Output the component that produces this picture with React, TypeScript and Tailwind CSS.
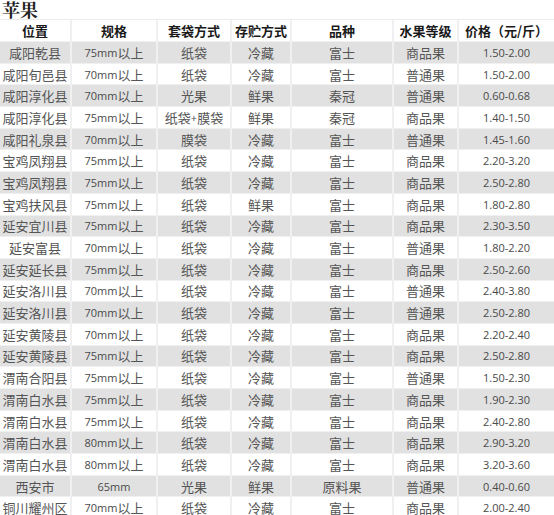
import React from 'react';

const HEADERS = ["位置", "规格", "套袋方式", "存贮方式", "品种", "水果等级", "价格（元/斤）"];

const ROWS: string[][] = [
  ["咸阳乾县", "75mm以上", "纸袋", "冷藏", "富士", "商品果", "1.50-2.00"],
  ["咸阳旬邑县", "70mm以上", "纸袋", "冷藏", "富士", "普通果", "1.50-2.00"],
  ["咸阳淳化县", "70mm以上", "光果", "鲜果", "秦冠", "普通果", "0.60-0.68"],
  ["咸阳淳化县", "75mm以上", "纸袋+膜袋", "鲜果", "秦冠", "商品果", "1.40-1.50"],
  ["咸阳礼泉县", "70mm以上", "膜袋", "冷藏", "富士", "普通果", "1.45-1.60"],
  ["宝鸡凤翔县", "75mm以上", "纸袋", "冷藏", "富士", "商品果", "2.20-3.20"],
  ["宝鸡凤翔县", "75mm以上", "纸袋", "冷藏", "富士", "商品果", "2.50-2.80"],
  ["宝鸡扶风县", "75mm以上", "纸袋", "鲜果", "富士", "商品果", "1.80-2.80"],
  ["延安宜川县", "75mm以上", "纸袋", "冷藏", "富士", "商品果", "2.30-3.50"],
  ["延安富县", "70mm以上", "纸袋", "冷藏", "富士", "普通果", "1.80-2.20"],
  ["延安延长县", "75mm以上", "纸袋", "冷藏", "富士", "商品果", "2.50-2.60"],
  ["延安洛川县", "70mm以上", "纸袋", "冷藏", "富士", "普通果", "2.40-3.80"],
  ["延安洛川县", "70mm以上", "纸袋", "冷藏", "富士", "普通果", "2.50-2.80"],
  ["延安黄陵县", "70mm以上", "纸袋", "冷藏", "富士", "商品果", "2.20-2.40"],
  ["延安黄陵县", "75mm以上", "纸袋", "冷藏", "富士", "商品果", "2.50-2.80"],
  ["渭南合阳县", "75mm以上", "纸袋", "冷藏", "富士", "普通果", "1.50-2.30"],
  ["渭南白水县", "75mm以上", "纸袋", "冷藏", "富士", "商品果", "1.90-2.30"],
  ["渭南白水县", "75mm以上", "纸袋", "冷藏", "富士", "商品果", "2.40-2.80"],
  ["渭南白水县", "80mm以上", "纸袋", "冷藏", "富士", "商品果", "2.90-3.20"],
  ["渭南白水县", "80mm以上", "纸袋", "冷藏", "富士", "商品果", "3.20-3.60"],
  ["西安市", "65mm", "光果", "鲜果", "原料果", "普通果", "0.40-0.60"],
  ["铜川耀州区", "70mm以上", "纸袋", "冷藏", "富士", "商品果", "2.00-2.40"],
];

const GRID = "grid grid-cols-[72px_86px_74px_60px_102px_65px_1fr]";

// latin runs are set a bit smaller than the CJK ones, like the original page
function Mixed({ text }: { text: string }) {
  const parts = text.match(/[\x00-\x7f]+|[^\x00-\x7f]+/g) || [];
  return (
    <>
      {parts.map((p, i) =>
        /^[\x00-\x7f]+$/.test(p) ? (
          <span key={i} className="text-[11px] text-[#4a4a4a] font-['Open_Sans','Noto_Sans_CJK_SC',sans-serif]">{p}</span>
        ) : (
          <span key={i} className="text-[13px]">{p}</span>
        )
      )}
    </>
  );
}

export default function App() {
  return (
    <div className="w-[554px] h-[515px] overflow-hidden bg-white font-['Noto_Sans_CJK_SC',sans-serif]">
      <div className="h-[19px] pl-[2px]">
        <h1 className="text-[18px] leading-[19px] font-bold text-[#222] font-['Noto_Serif_CJK_SC','Noto_Sans_CJK_SC',serif]">苹果</h1>
      </div>

      <div className="border-t border-[#ececec]">
        <div className={`${GRID} h-[22px] border-b border-[#f0f0f0] bg-white`}>
          {HEADERS.map((h, i) => (
            <div key={i} className="flex items-center justify-center border-r-2 border-[#f0f0f0] last:border-r-0 text-[13px] font-bold text-[#1a1a1a] leading-none">
              {h}
            </div>
          ))}
        </div>

        {ROWS.map((row, r) => (
          <div key={r} className={`${GRID} h-[21.7px] border-b border-[#f0f0f0] ${r % 2 === 0 ? 'bg-[#e1e1e1]' : 'bg-white'}`}>
            {row.map((cell, c) => (
              <div key={c} className="flex items-center justify-center border-r-2 border-[#f0f0f0] last:border-r-0 text-[#555] leading-none whitespace-nowrap">
                <Mixed text={cell} />
              </div>
            ))}
          </div>
        ))}
      </div>
    </div>
  );
}
